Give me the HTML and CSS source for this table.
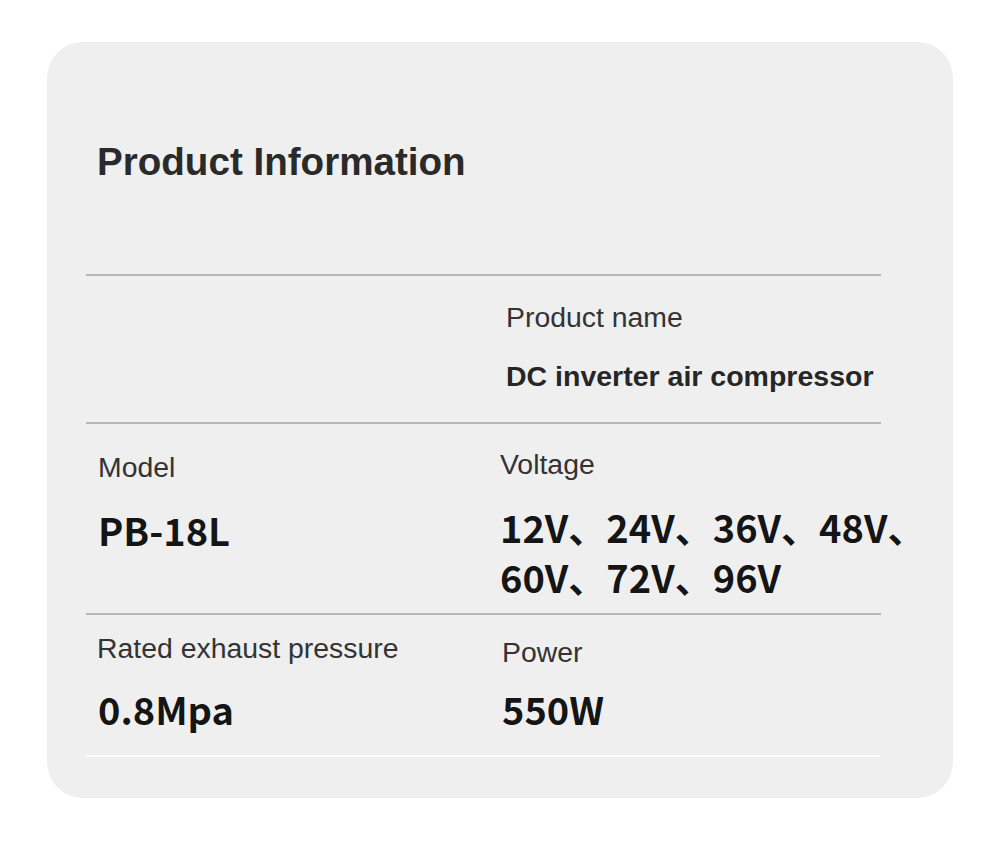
FILE: index.html
```html
<!DOCTYPE html>
<html lang="en">
<head>
<meta charset="utf-8">
<title>Product Information</title>
<link rel="stylesheet" href="styles.css">
</head>
<body>
<div class="card">
  <h1 class="title">Product Information</h1>
  <div class="table">
    <div class="row row-1">
      <div class="cell cell-left"></div>
      <div class="cell cell-right cell-name">
        <div class="label">Product name</div>
        <div class="value-text">DC inverter air compressor</div>
      </div>
    </div>
    <div class="row row-2">
      <div class="cell cell-left cell-model">
        <div class="label label-model">Model</div>
        <div class="value value-left">PB-18L</div>
      </div>
      <div class="cell cell-right">
        <div class="label">Voltage</div>
        <div class="value">
          <div class="value-line">12V、24V、36V、48V、</div>
          <div class="value-line">60V、72V、96V</div>
        </div>
      </div>
    </div>
    <div class="row row-3">
      <div class="cell cell-left">
        <div class="label">Rated exhaust pressure</div>
        <div class="value value-left value-r3">0.8Mpa</div>
      </div>
      <div class="cell cell-right cell-power">
        <div class="label">Power</div>
        <div class="value value-r3p">550W</div>
      </div>
    </div>
  </div>
</div>
</body>
</html>
```

FILE: styles.css
```css
html, body {
  margin: 0;
  padding: 0;
  background: #ffffff;
}

body {
  width: 1000px;
  height: 863px;
  font-family: "Liberation Sans", Arial, sans-serif;
  color: #2b2b2b;
}

.card {
  box-sizing: border-box;
  margin: 42px 0 0 47px;
  width: 906px;
  height: 756px;
  background: #efefef;
  border-radius: 36px;
  padding-top: 98px;
}

.title {
  margin: 0 0 0 50px;
  font-size: 38.6px;
  line-height: 44px;
  font-weight: bold;
  color: #2a2a2a;
}

.table {
  margin: 90px 0 0 39px;
  width: 795px;
  border-bottom: 2px solid #fbfbfb;
}

.row {
  box-sizing: border-box;
  display: grid;
  grid-template-columns: 414px 1fr;
  border-top: 2px solid #b6b6b6;
}

.row-1 { height: 148px; padding-top: 24px; }
.row-2 { height: 191px; padding-top: 23px; }
.row-3 { height: 142px; padding-top: 16px; }

.cell-left {
  padding-left: 11px;
}

.cell-name { padding-left: 6px; }
.cell-model { padding-top: 3px; }
.cell-power { padding-left: 2px; padding-top: 4px; }

.label {
  font-size: 28.4px;
  line-height: 34px;
  color: #333333;
  white-space: nowrap;
}

.label-model { margin-left: 1px; }

.value-text {
  margin-top: 25px;
  font-size: 28.5px;
  line-height: 34px;
  font-weight: bold;
  color: #262626;
  white-space: nowrap;
}

.value {
  margin-top: 21px;
  font-family: "Noto Sans CJK SC", "Noto Sans", sans-serif;
  font-size: 38px;
  line-height: 50px;
  font-weight: bold;
  color: #151515;
  white-space: nowrap;
  text-shadow: 0 0 1px #ffffff, 0 0 1px #ffffff;
}

.value-left { margin-left: 1px; }

.value-line {
  height: 50px;
}

.value-r3 { margin-top: 19px; }
.value-r3p { margin-top: 15px; }
```
